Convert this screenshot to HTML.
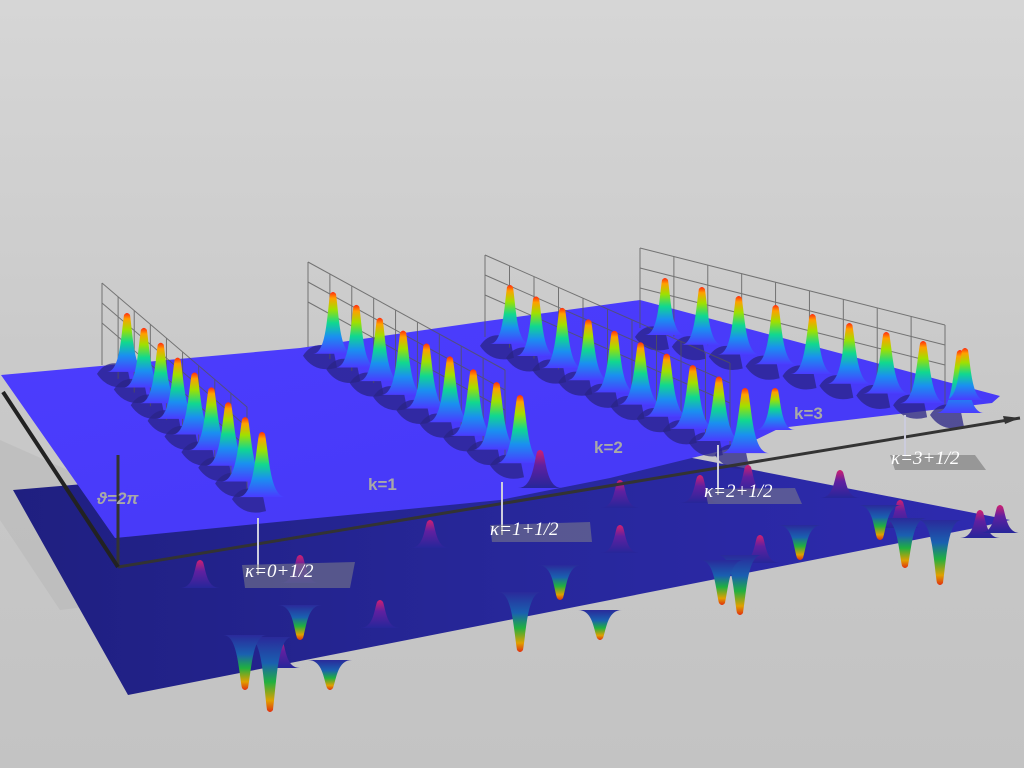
<!DOCTYPE html>
<html><head><meta charset="utf-8"><style>
html,body{margin:0;padding:0;width:1024px;height:768px;overflow:hidden;background:#c6c6c6}
svg{display:block}
.lab{font-family:"Liberation Serif",serif;font-style:italic;fill:#fff;font-size:19px}
.k{font-family:"Liberation Sans",sans-serif;fill:#a8a8a8;font-size:17px;font-weight:bold}
</style></head><body>
<svg id="s" width="1024" height="768" viewBox="0 0 1024 768" xmlns="http://www.w3.org/2000/svg">
<defs>
<linearGradient id="bg" x1="0" y1="0" x2="0" y2="1">
<stop offset="0" stop-color="#d6d6d6"/><stop offset="0.5" stop-color="#c9c9c9"/><stop offset="1" stop-color="#c3c3c3"/></linearGradient>
<linearGradient id="pk" x1="0" y1="0" x2="0" y2="1">
<stop offset="0" stop-color="#ff2a10"/><stop offset="0.1" stop-color="#ffa000"/><stop offset="0.28" stop-color="#a0e000"/><stop offset="0.5" stop-color="#10d890"/><stop offset="0.72" stop-color="#1a90f0"/><stop offset="1" stop-color="#4a3cff"/></linearGradient>
<linearGradient id="nk" x1="0" y1="0" x2="0" y2="1">
<stop offset="0" stop-color="#2a2a9a"/><stop offset="0.35" stop-color="#1a60b0"/><stop offset="0.6" stop-color="#20b040"/><stop offset="0.85" stop-color="#e0a000"/><stop offset="1" stop-color="#e03010"/></linearGradient>
<linearGradient id="bk" x1="0" y1="0" x2="0" y2="1">
<stop offset="0" stop-color="#d02070"/><stop offset="0.4" stop-color="#6020a0"/><stop offset="1" stop-color="#26269a"/></linearGradient>
<linearGradient id="up" x1="0" y1="0" x2="1" y2="1">
<stop offset="0" stop-color="#4d3dff"/><stop offset="1" stop-color="#4438f4"/></linearGradient>
<linearGradient id="lo" x1="0" y1="0" x2="1" y2="0">
<stop offset="0" stop-color="#1f1f80"/><stop offset="0.5" stop-color="#27279a"/><stop offset="1" stop-color="#2e2ab0"/></linearGradient>
</defs>
<rect width="1024" height="768" fill="url(#bg)"/>
<polygon points="0,440 0,520 60,610 140,600 90,480" fill="#b9b9b9" opacity="0.6"/>
<polygon points="13,490 600,440 1010,520 980,527 128,695" fill="url(#lo)"/>
<g id="neg"></g>
<polygon points="1,375 300,348 480,322 640,300 1000,396 992,403 780,428 745,445 610,478 500,500 115,538" fill="url(#up)"/>
<g id="sh"></g>
<g id="grid" stroke="#555" stroke-width="1" fill="none" opacity="0.75"></g>
<g id="pos"></g>
<line x1="118" y1="567" x2="1020" y2="418" stroke="#333" stroke-width="3"/>
<polygon points="1020,418 1003,416 1005,424" fill="#333"/>
<line x1="118" y1="567" x2="118" y2="455" stroke="#333" stroke-width="3"/>
<line x1="118" y1="567" x2="3" y2="392" stroke="#222" stroke-width="4"/>
<line x1="258" y1="518" x2="258" y2="575" stroke="#ccd" stroke-width="2"/>
<line x1="502" y1="482" x2="502" y2="535" stroke="#ccd" stroke-width="2"/>
<line x1="718" y1="445" x2="718" y2="495" stroke="#ccd" stroke-width="2"/>
<line x1="905" y1="415" x2="905" y2="460" stroke="#ccd" stroke-width="2"/>
<polygon points="242,565 355,562 350,588 245,588" fill="#888" opacity="0.5"/>
<polygon points="490,525 590,522 592,542 492,542" fill="#888" opacity="0.5"/>
<polygon points="705,489 795,488 802,504 708,504" fill="#888" opacity="0.5"/>
<polygon points="890,455 975,455 986,470 895,470" fill="#777" opacity="0.6"/>
<text class="lab" x="245" y="577">κ=0+1/2</text>
<text class="lab" x="490" y="535">κ=1+1/2</text>
<text class="lab" x="704" y="497">κ=2+1/2</text>
<text class="lab" x="891" y="464" font-size="17">κ=3+1/2</text>
<text class="k" x="97" y="504" font-family="Liberation Serif" font-style="italic" font-weight="normal" fill="#bbb" font-size="20">ϑ=2π</text>
<text class="k" x="368" y="490">k=1</text>
<text class="k" x="594" y="453">k=2</text>
<text class="k" x="794" y="419">k=3</text>
</svg>
<script>
var NS="http://www.w3.org/2000/svg";
function el(p,t,a){var e=document.createElementNS(NS,t);for(var k in a)e.setAttribute(k,a[k]);p.appendChild(e);return e;}
var pos=document.getElementById("pos"),neg=document.getElementById("neg"),grid=document.getElementById("grid"),sh=document.getElementById("sh");
function peak(g,x,y,h,w,fill,dir){
 var b=y+h*dir;
 var d="M"+(x-w)+","+b+" C"+(x-w*0.35)+","+b+" "+(x-w*0.3)+","+(y+h*0.4*dir)+" "+(x-3)+","+(y+2*dir)+
 " Q"+x+","+(y-2*dir)+" "+(x+3)+","+(y+2*dir)+" C"+(x+w*0.3)+","+(y+h*0.4*dir)+" "+(x+w*0.35)+","+b+" "+(x+w)+","+b+" Z";
 el(g,"path",{d:d,fill:fill});
}
var rows=[[127,313,262,432,9,62],[333,292,520,395,9,65],[510,285,745,388,10,62],[665,278,960,350,9,60]];
rows.forEach(function(r){
 var n=r[4];
 var gx0=r[0]-25,gy0=r[1]-30,gx1=r[2]-15,gy1=r[3]-25;
 el(grid,"line",{x1:gx0,y1:gy0,x2:gx1,y2:gy1});
 el(grid,"line",{x1:gx0,y1:gy0+20,x2:gx1,y2:gy1+20});
 el(grid,"line",{x1:gx0,y1:gy0+40,x2:gx1,y2:gy1+40});
 for(var i=0;i<=n;i++){var t=i/n,x=gx0+(gx1-gx0)*t,y=gy0+(gy1-gy0)*t;el(grid,"line",{x1:x,y1:y,x2:x,y2:y+r[5]+20});}
 for(var i=0;i<n;i++){var t=n>1?i/(n-1):0;
  var x=r[0]+(r[2]-r[0])*t,y=r[1]+(r[3]-r[1])*t,h=r[5]*(0.95+0.1*t);
  el(sh,"path",{d:"M"+(x-30)+","+(y+h+2)+" Q"+(x-20)+","+(y+h-14)+" "+(x)+","+(y+h-6)+" L"+(x+4)+","+(y+h+14)+" Q"+(x-18)+","+(y+h+20)+" "+(x-30)+","+(y+h+2)+"Z",fill:"#2a2486",opacity:0.75});
  peak(pos,x,y,h,20+4*t,"url(#pk)",1);}
});
peak(pos,965,348,52,20,"url(#pk)",1);
peak(pos,775,388,42,20,"url(#pk)",1);
peak(pos,540,450,38,22,"url(#bk)",1);
peak(pos,748,465,30,20,"url(#bk)",1);
// lower plane bumps & negative peaks
var bumps=[[200,560],[300,555],[430,520],[620,480],[700,475],[840,470],[620,525],[760,535],[900,500],[280,640],[380,600],[980,510],[1000,505]];
bumps.forEach(function(p){peak(neg,p[0],p[1],28,20,"url(#bk)",1);});
var ng=[[270,712,75],[245,690,55],[520,652,60],[740,615,60],[722,605,45],[940,585,65],[905,568,50],[300,640,35],[560,600,35],[800,560,35],[880,540,35],[330,690,30],[600,640,30]];
ng.forEach(function(p){peak(neg,p[0],p[1],p[2],22,"url(#nk)",-1);});
</script>
</body></html>
